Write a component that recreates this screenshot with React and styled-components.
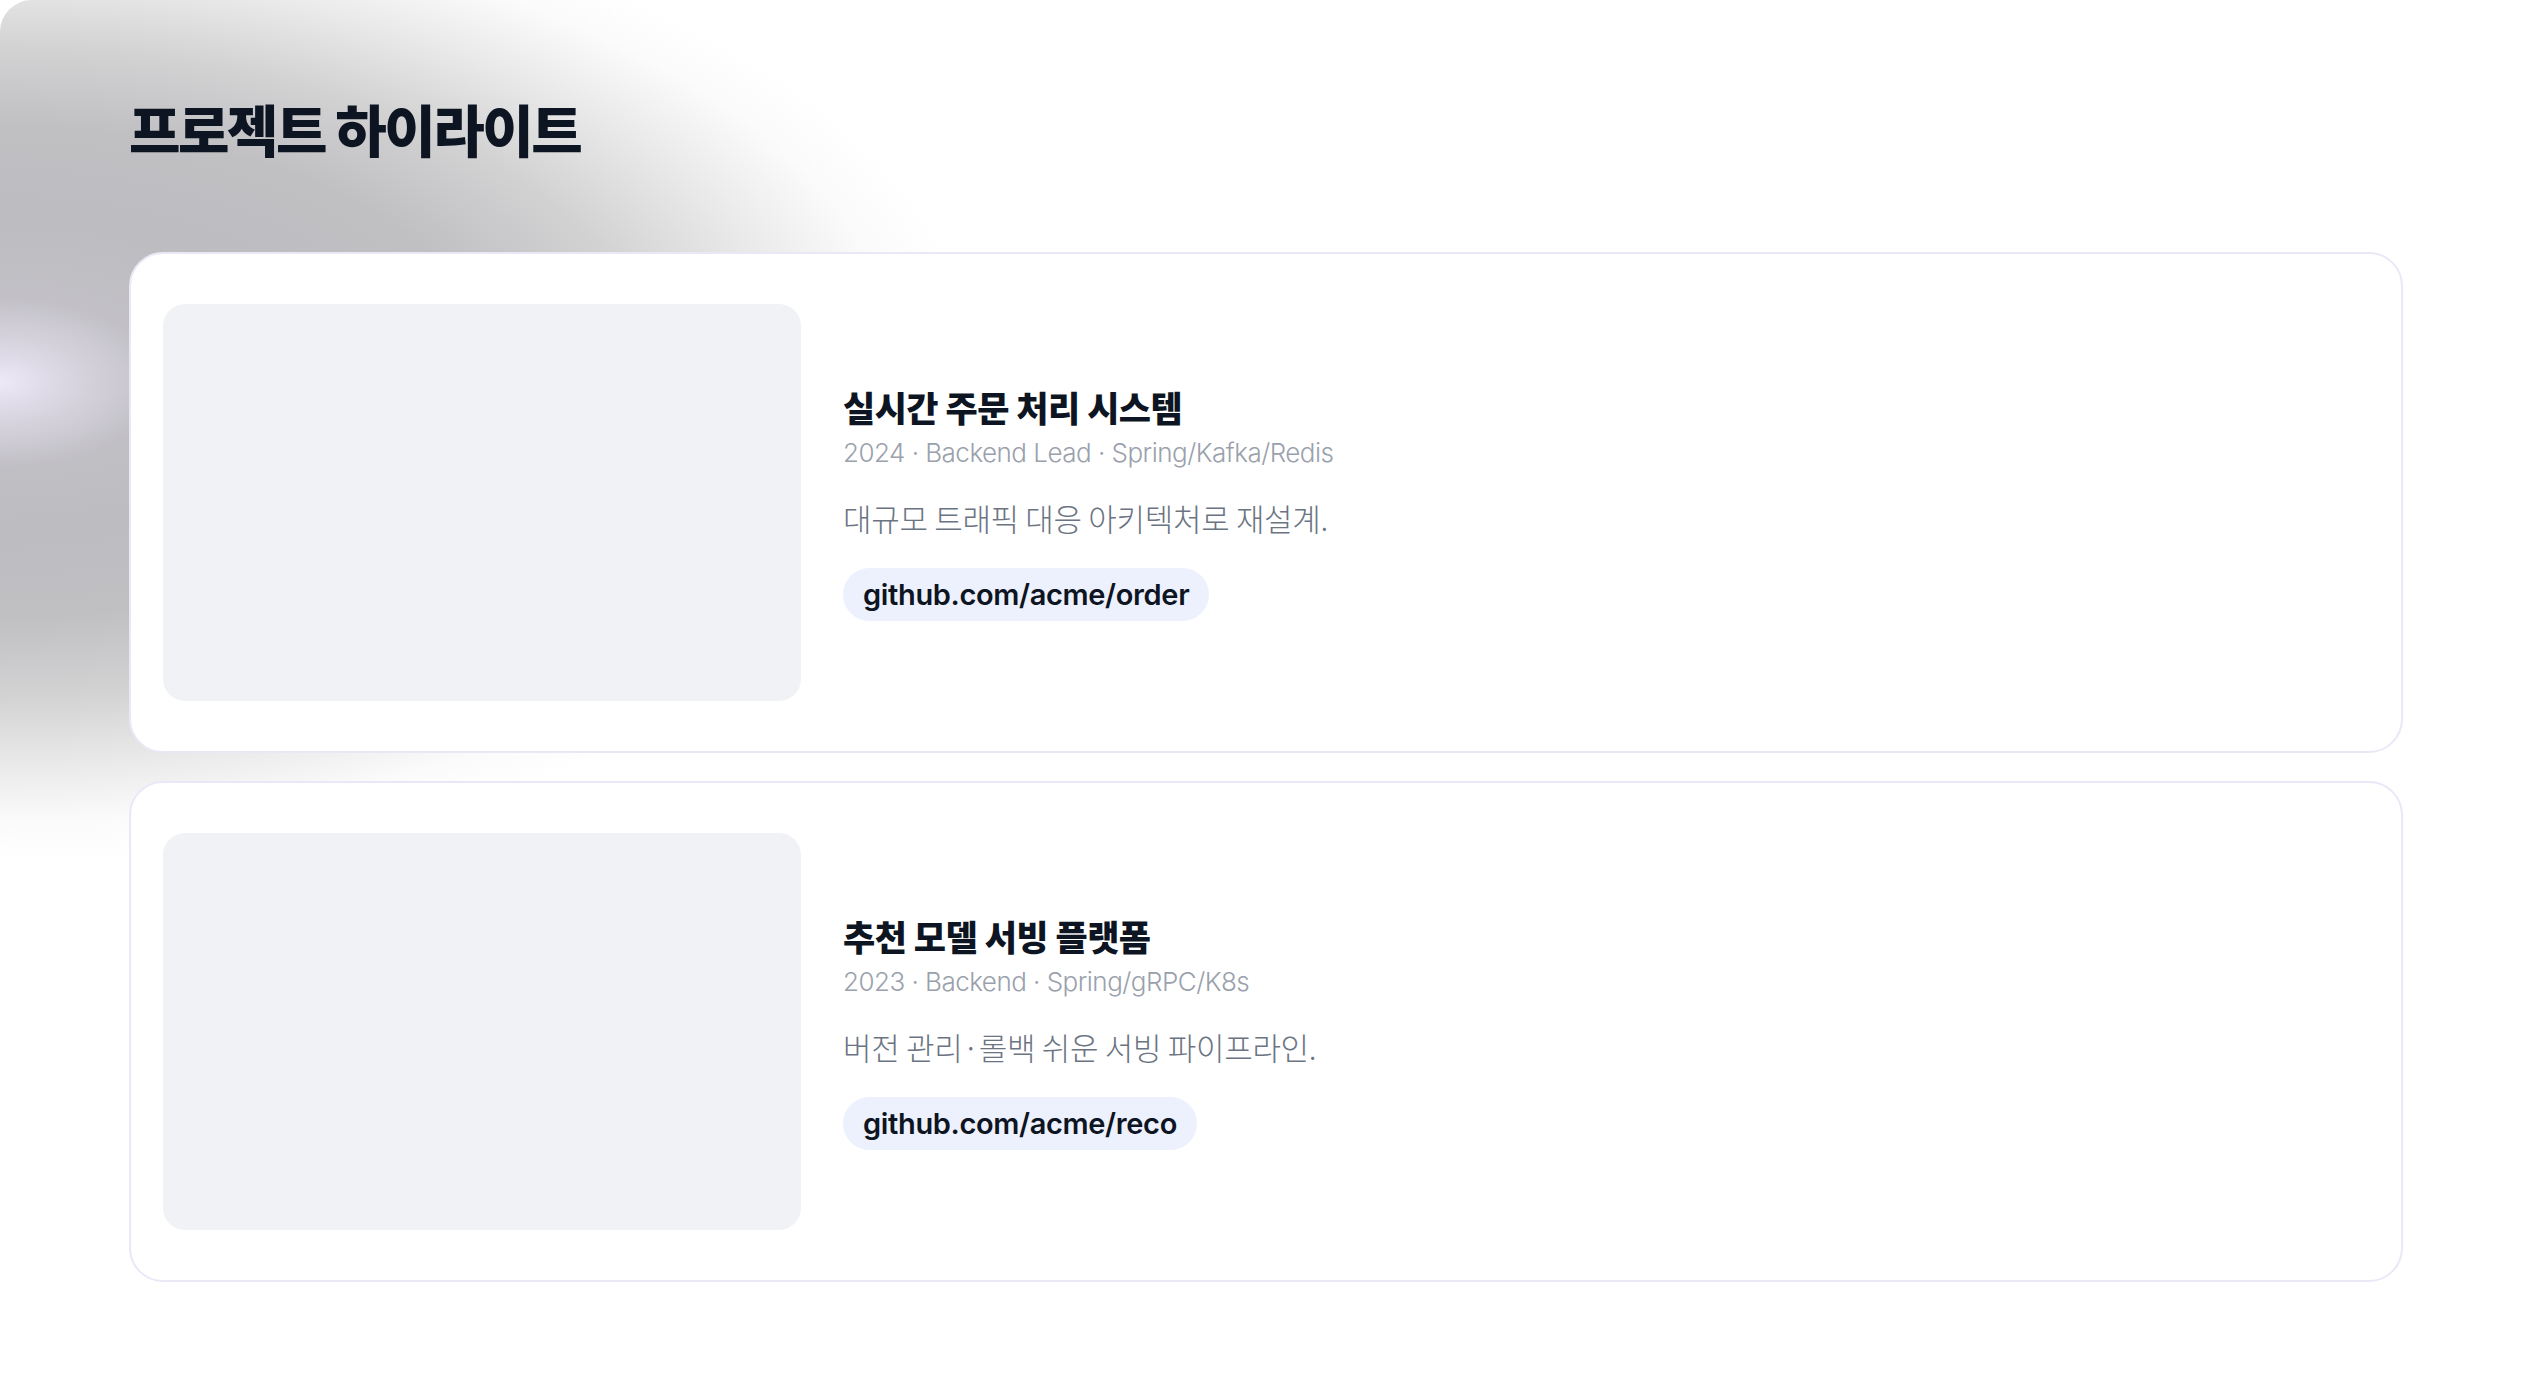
import React from "react";
import styled, { createGlobalStyle } from "styled-components";

const GlobalStyle = createGlobalStyle`
  html, body {
    margin: 0;
    padding: 0;
    background: #ffffff;
  }
  body {
    font-family: "Noto Sans CJK KR", "Noto Sans", sans-serif;
    -webkit-font-smoothing: antialiased;
  }
  * {
    box-sizing: border-box;
  }
`;

const Page = styled.div`
  position: relative;
  min-height: 100vh;
  overflow: hidden;
  background: #ffffff;
`;

// decorative light blob behind the heading
const Glow = styled.div`
  position: absolute;
  top: 0;
  left: 0;
  width: 1050px;
  height: 880px;
  border-top-left-radius: 32px;
  background:
    radial-gradient(
      ellipse 160px 85px at 0 382px,
      rgba(238, 233, 247, 1) 0%,
      rgba(226, 221, 235, 0.8) 35%,
      rgba(205, 202, 212, 0) 100%
    ),
    radial-gradient(
      ellipse 980px 490px at 0 372px,
      #c6c4cb 0%,
      #bdbcc0 32%,
      #c0bfc2 50%,
      #d2d2d3 66%,
      #e9e9e9 80%,
      #fbfbfb 92%,
      rgba(255, 255, 255, 0) 100%
    );
  pointer-events: none;
`;

const Section = styled.section`
  position: relative;
  z-index: 1;
  padding: 94px 131px 80px 129px;
`;

const Heading = styled.h1`
  margin: 0 0 91px;
  font-family: "Noto Sans CJK KR", sans-serif;
  font-size: 56px;
  font-weight: 900;
  line-height: 1.2;
  letter-spacing: -0.045em;
  color: #0d1422;
`;

const CardList = styled.div`
  display: flex;
  flex-direction: column;
  gap: 28px;
`;

const Card = styled.article`
  display: grid;
  grid-template-columns: 638px 1fr;
  column-gap: 42px;
  align-items: center;
  padding: 50px 32px;
  background: #ffffff;
  border: 2px solid #eae8f7;
  border-radius: 34px;
`;

const Thumb = styled.div`
  height: 397px;
  background: #f1f2f6;
  border-radius: 22px;
`;

const Body = styled.div`
  display: flex;
  flex-direction: column;
  align-items: flex-start;
`;

const Title = styled.h2`
  margin: 0;
  font-family: "Noto Sans CJK KR", sans-serif;
  font-size: 35px;
  font-weight: 900;
  line-height: 1.3;
  letter-spacing: -0.015em;
  color: #0d1422;
`;

const Meta = styled.div`
  margin-top: 7px;
  font-family: Inter, "Noto Sans CJK KR", sans-serif;
  font-size: 26px;
  font-weight: 300;
  line-height: 1.3;
  letter-spacing: -0.02em;
  color: #9aa1ac;
`;

const Desc = styled.p`
  margin: 28px 0 0;
  font-family: "Noto Sans CJK KR", sans-serif;
  font-size: 31px;
  font-weight: 300;
  line-height: 1.3;
  letter-spacing: -0.01em;
  color: #6b7482;
`;

const Chip = styled.a`
  display: inline-flex;
  align-items: center;
  height: 53px;
  margin-top: 30px;
  padding: 0 20px;
  border-radius: 27px;
  background: #edf1fd;
  font-family: Inter, sans-serif;
  font-size: 29px;
  font-weight: 600;
  letter-spacing: -0.012em;
  color: #0d1422;
  text-decoration: none;
`;

const projects = [
  {
    title: "실시간 주문 처리 시스템",
    meta: "2024 · Backend Lead · Spring/Kafka/Redis",
    desc: "대규모 트래픽 대응 아키텍처로 재설계.",
    link: "github.com/acme/order",
  },
  {
    title: "추천 모델 서빙 플랫폼",
    meta: "2023 · Backend · Spring/gRPC/K8s",
    desc: "버전 관리·롤백 쉬운 서빙 파이프라인.",
    link: "github.com/acme/reco",
  },
];

const App = () => {
  return (
    <Page>
      <GlobalStyle />
      <Glow />
      <Section>
        <Heading>프로젝트 하이라이트</Heading>
        <CardList>
          {projects.map((p) => (
            <Card key={p.link}>
              <Thumb />
              <Body>
                <Title>{p.title}</Title>
                <Meta>{p.meta}</Meta>
                <Desc>{p.desc}</Desc>
                <Chip href={"https://" + p.link}>{p.link}</Chip>
              </Body>
            </Card>
          ))}
        </CardList>
      </Section>
    </Page>
  );
};

export default App;
